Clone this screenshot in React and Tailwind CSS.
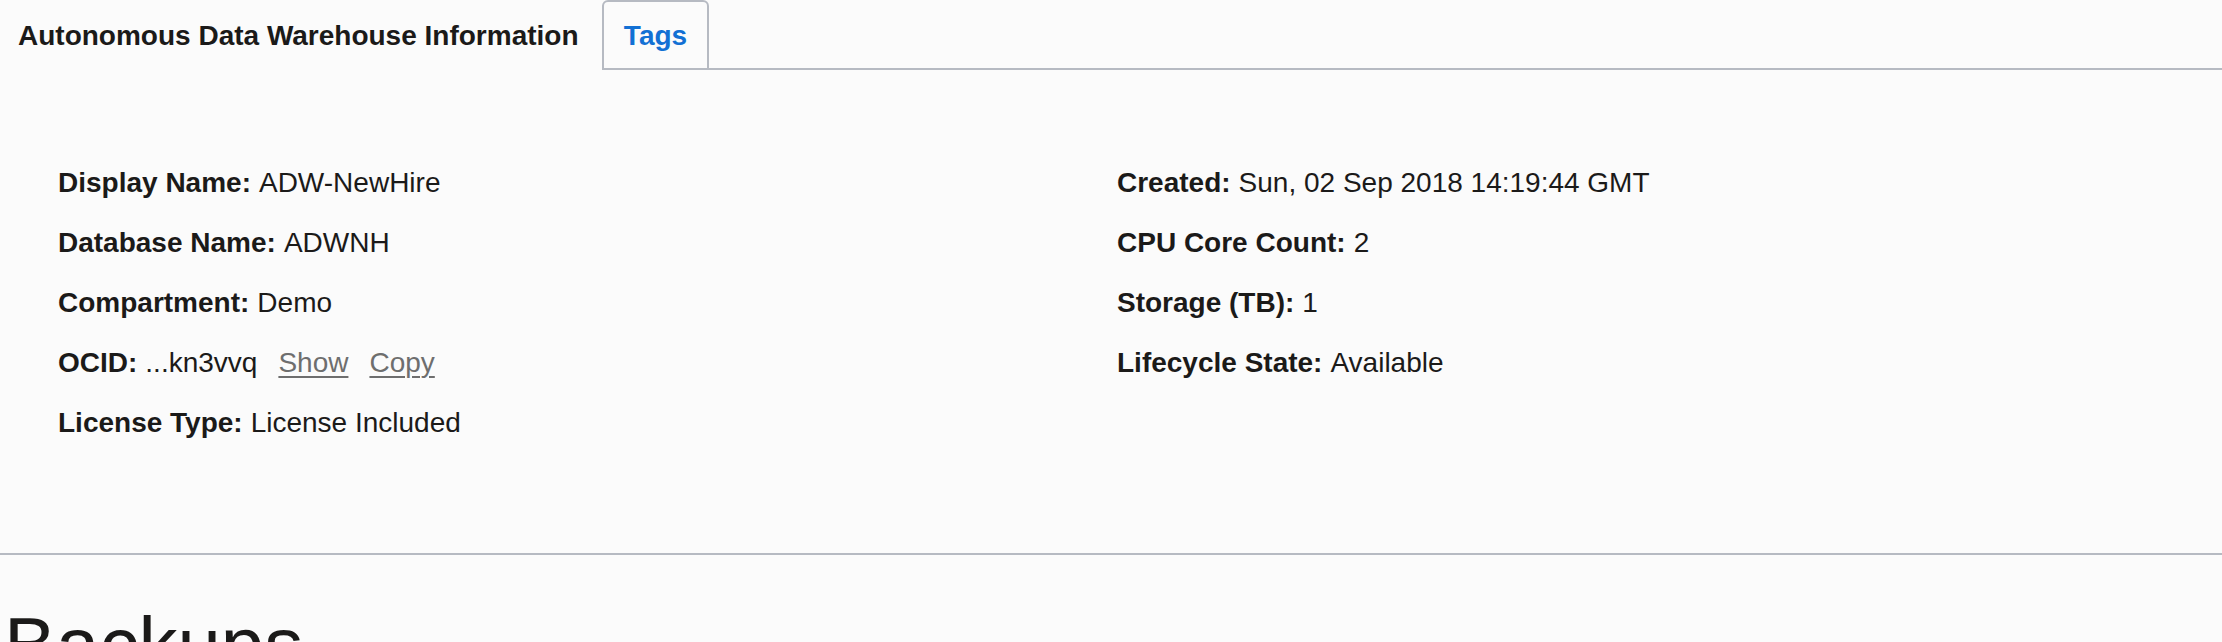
import React from "react";

const leftRows = [
  { label: "Display Name:", value: "ADW-NewHire" },
  { label: "Database Name:", value: "ADWNH" },
  { label: "Compartment:", value: "Demo" },
  { label: "OCID:", value: "...kn3vvq", links: ["Show", "Copy"] },
  { label: "License Type:", value: "License Included" },
];

const rightRows = [
  { label: "Created:", value: "Sun, 02 Sep 2018 14:19:44 GMT" },
  { label: "CPU Core Count:", value: "2" },
  { label: "Storage (TB):", value: "1" },
  { label: "Lifecycle State:", value: "Available" },
];

function InfoRow({ row }) {
  return (
    <div className="flex items-center leading-[40px] whitespace-nowrap">
      <span className="font-bold">{row.label}</span>
      <span className="ml-[8px]">{row.value}</span>
      {row.links &&
        row.links.map((link) => (
          <a
            key={link}
            href="#"
            className="ml-[21px] text-[#6e6e6e] underline underline-offset-[4px] decoration-[2px]"
          >
            {link}
          </a>
        ))}
    </div>
  );
}

export default function App() {
  return (
    <div
      className="h-screen bg-[#fbfbfb] text-[#1b1a19] text-[28px] overflow-hidden"
      style={{ fontFamily: '"Liberation Sans", Arial, sans-serif' }}
    >
      {/* tabs */}
      <div className="flex h-[70px]">
        <div className="w-[602px] pl-[18px] flex items-center pt-[2px] font-bold">
          Autonomous Data Warehouse Information
        </div>
        <div className="w-[107px] justify-center flex items-center pt-[2px] border-2 border-[#b6bac2] rounded-t-[6px] font-bold text-[#1270d4]">
          Tags
        </div>
        <div className="flex-1 border-b-2 border-[#b6bac2]"></div>
      </div>

      {/* details */}
      <div className="grid grid-cols-[1059px_1fr] pl-[58px] pt-[93px] pb-[110px] border-b-2 border-[#b6bac2]">
        <div className="flex flex-col gap-[20px]">
          {leftRows.map((row) => (
            <InfoRow key={row.label} row={row} />
          ))}
        </div>
        <div className="flex flex-col gap-[20px]">
          {rightRows.map((row) => (
            <InfoRow key={row.label} row={row} />
          ))}
        </div>
      </div>

      <h2 className="mt-[45px] pl-[4px] text-[78px] leading-[90px] font-normal">Backups</h2>
    </div>
  );
}
